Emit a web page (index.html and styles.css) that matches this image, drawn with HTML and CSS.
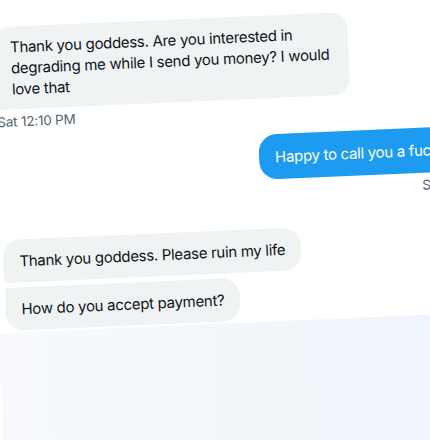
FILE: index.html
```html
<!DOCTYPE html>
<html lang="en">
<head>
    <meta charset="UTF-8">
    <meta name="viewport" content="width=device-width, initial-scale=1.0">
    <title>Messages</title>
    <link rel="stylesheet" href="styles.css">
</head>
<body>
    <div class="screen">
        <div class="thread">
            <div class="msg in">
                <div class="bubble single">Thank you goddess. Are you interested in degrading me while I send you money? I would love that</div>
                <div class="time">Sat 12:10 PM</div>
            </div>
            <div class="msg out">
                <div class="bubble">Happy to call you a fuckup</div>
                <div class="time">Sat 12:10 PM</div>
            </div>
            <div class="msg in group">
                <div class="bubble first">Thank you goddess. Please ruin my life</div>
                <div class="bubble last">How do you accept payment?</div>
            </div>
        </div>
        <div class="composer"></div>
    </div>
</body>
</html>
```

FILE: styles.css
```css
body {
    margin: 0;
    width: 430px;
    height: 440px;
    overflow: hidden;
    background: #ffffff;
    font-family: Inter, "Noto Sans", sans-serif;
    color: #0f1419;
}
.screen {
    width: 516px;
    margin-left: -16px;
    padding-top: 27px;
    transform: rotate(-2.5deg);
    transform-origin: 16px 0;
}
.thread {
    display: flex;
    flex-direction: column;
    padding: 0 8px;
}
.msg {
    display: flex;
    flex-direction: column;
}
.msg.in {
    align-items: flex-start;
}
.msg.out {
    align-items: flex-end;
    margin-top: 15px;
}
.msg.group {
    margin-top: 28px;
    gap: 5px;
}
.bubble {
    font-size: 15px;
    letter-spacing: -0.3px;
    line-height: 21px;
    padding: 10px 16px;
    border-radius: 18px;
}
.msg.in .bubble {
    background: #eff3f4;
    max-width: 322px;
}
.msg.out .bubble {
    background: #1d9bf0;
    color: #ffffff;
    padding: 12px 16px;
    min-width: 208px;
    white-space: nowrap;
}
.msg.group .bubble {
    padding: 11px 16px;
}
.bubble.single,
.bubble.first {
    border-bottom-left-radius: 4px;
}
.bubble.last {
    border-top-left-radius: 4px;
}
.time {
    margin-top: 3px;
    font-size: 13.5px;
    letter-spacing: -0.2px;
    line-height: 18px;
    color: #536471;
}
.composer {
    height: 200px;
    margin-top: 2px;
    background: linear-gradient(90deg, #f7f9fc, #edf4fb);
}
```
